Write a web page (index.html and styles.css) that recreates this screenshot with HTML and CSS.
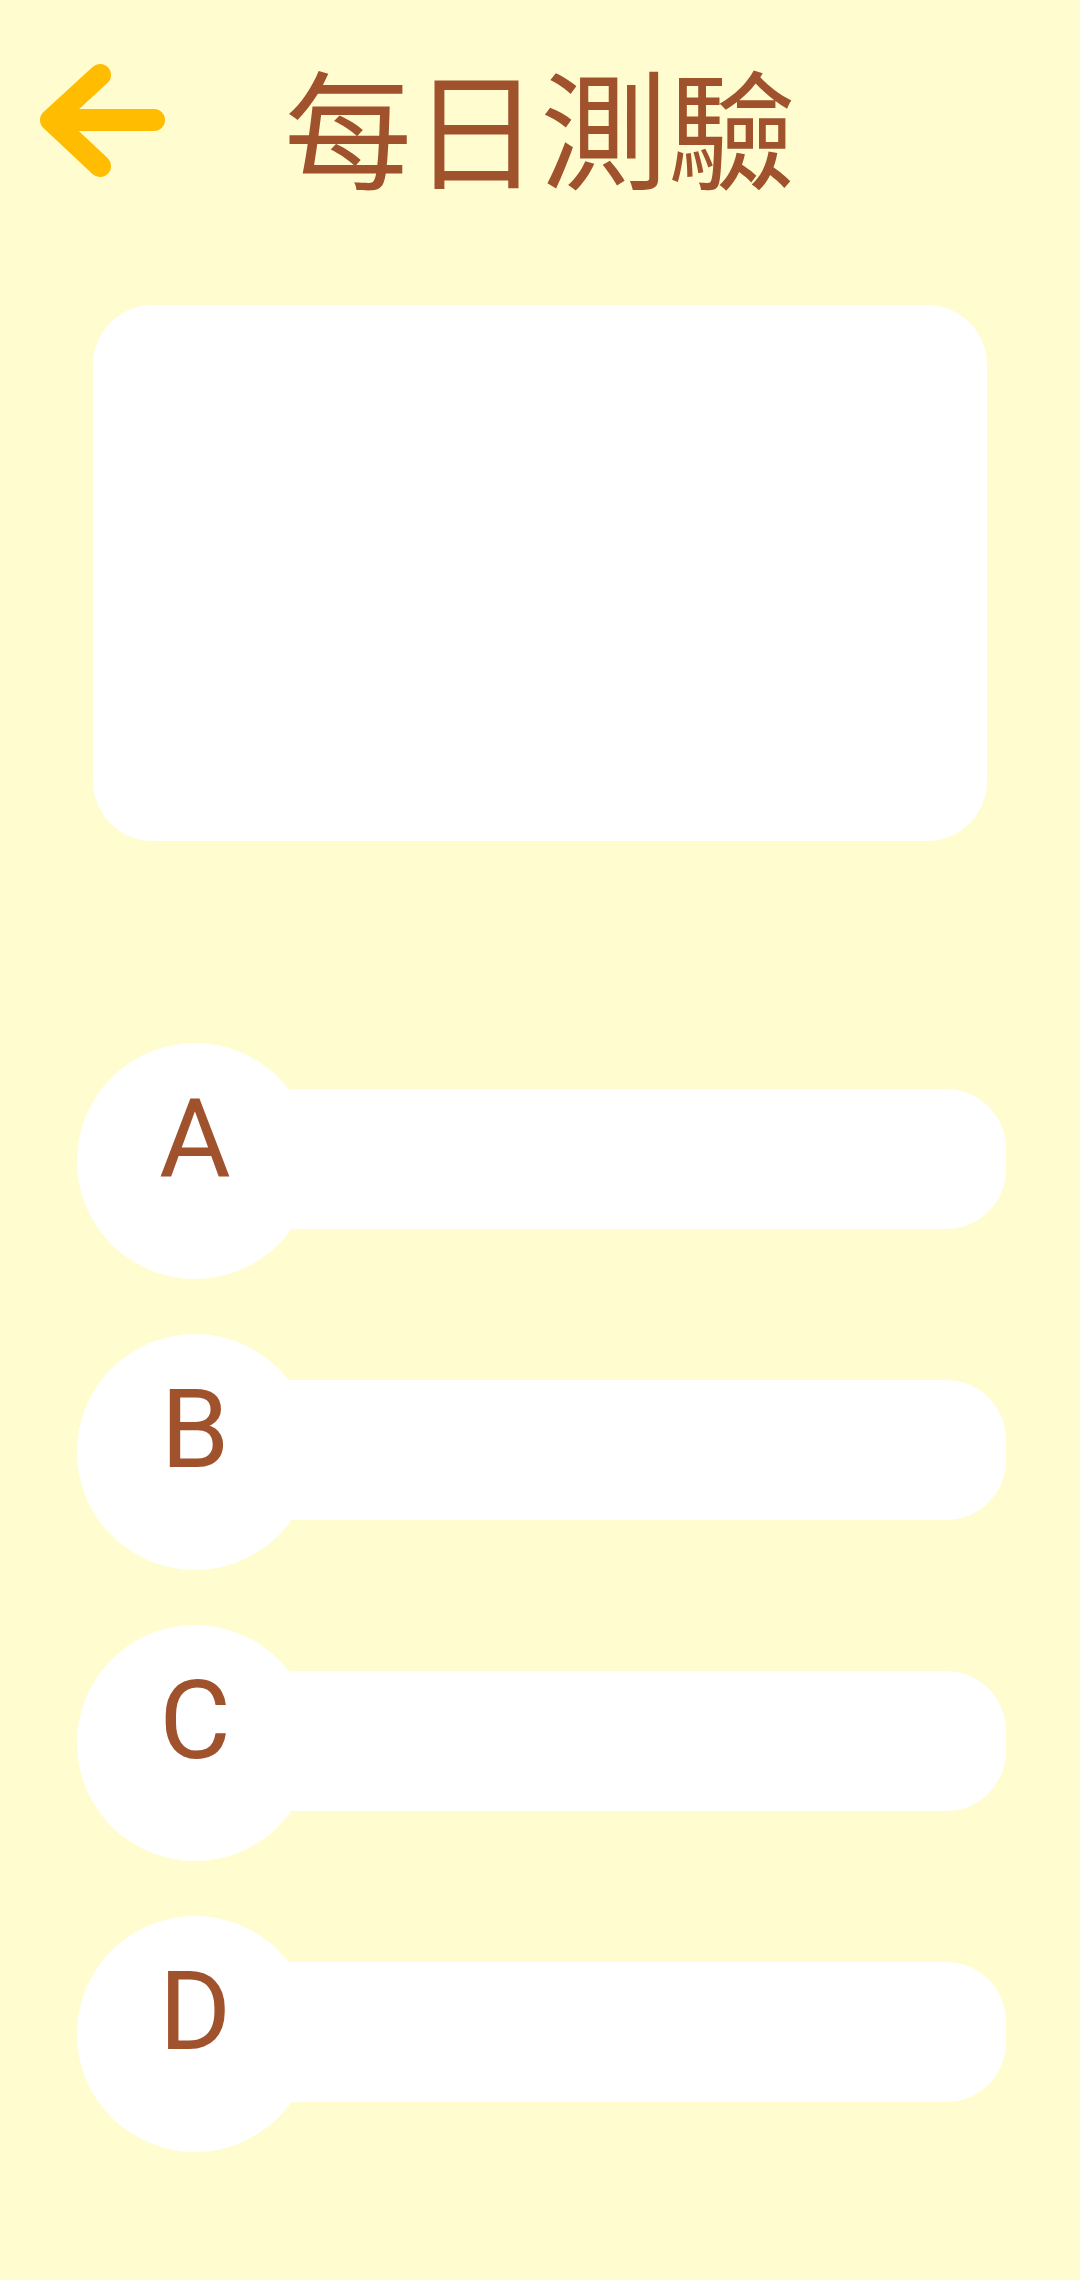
FILE: index.html
```html
<!DOCTYPE html>
<html lang="zh-Hant">
<head>
<meta charset="utf-8">
<title>每日測驗</title>
<link rel="stylesheet" href="styles.css">
</head>
<body>
<div class="screen">
  <header class="header">
    <button class="back" aria-label="back">
      <svg width="140" height="140" viewBox="0 0 140 140">
        <path d="M122 70 H19 M68 25 L19 70 L68 116" fill="none" stroke="#FFBC00" stroke-width="22" stroke-linecap="round" stroke-linejoin="round"/>
      </svg>
    </button>
    <h1 class="title">每日測驗</h1>
    <div class="spacer"></div>
  </header>

  <section class="question-card"></section>

  <ul class="options">
    <li class="option"><div class="badge"><span class="letter">A</span></div><div class="answer"></div></li>
    <li class="option"><div class="badge"><span class="letter">B</span></div><div class="answer"></div></li>
    <li class="option"><div class="badge"><span class="letter">C</span></div><div class="answer"></div></li>
    <li class="option"><div class="badge"><span class="letter">D</span></div><div class="answer"></div></li>
  </ul>
</div>
</body>
</html>
```
FILE: styles.css
```css
* { box-sizing: border-box; }
html, body {
  margin: 0;
  padding: 0;
  background: #FFFDD0;
}
.screen {
  width: 1080px;
  height: 2280px;
  background: #FFFDD0;
  overflow: hidden;
}
.header {
  display: grid;
  grid-template-columns: 1fr auto 1fr;
  align-items: start;
  height: 240px;
}
.back {
  margin: 50px 0 0 32px;
  padding: 0;
  border: 0;
  background: none;
  width: 140px;
  height: 140px;
  display: block;
  justify-self: start;
}
.back svg { display: block; }
.title {
  margin: 61px 0 0 0;
  font-family: "Noto Sans CJK TC", "Noto Sans CJK SC", sans-serif;
  font-weight: 400;
  font-size: 128px;
  line-height: 1;
  color: #A0522D;
  white-space: nowrap;
}
.question-card {
  margin: 65px 93px 0 93px;
  height: 536px;
  background: #FFFFFF;
  border-radius: 60px;
}
.options {
  list-style: none;
  margin: 202px 0 0 0;
  padding: 0 74px 0 77px;
  display: flex;
  flex-direction: column;
  gap: 55px;
}
.option {
  display: flex;
  align-items: center;
  height: 236px;
}
.badge {
  position: relative;
  z-index: 1;
  flex: 0 0 236px;
  width: 236px;
  height: 236px;
  border-radius: 50%;
  background: #FFFFFF;
  display: flex;
  justify-content: center;
  align-items: flex-start;
  padding-top: 41px;
}
.letter {
  font-family: Roboto, "Liberation Sans", sans-serif;
  font-size: 110px;
  line-height: 1;
  color: #A0522D;
}
.answer {
  flex: 1;
  height: 140px;
  margin-left: -118px;
  margin-top: -4px;
  background: #FFFFFF;
  border-radius: 60px;
}
```
